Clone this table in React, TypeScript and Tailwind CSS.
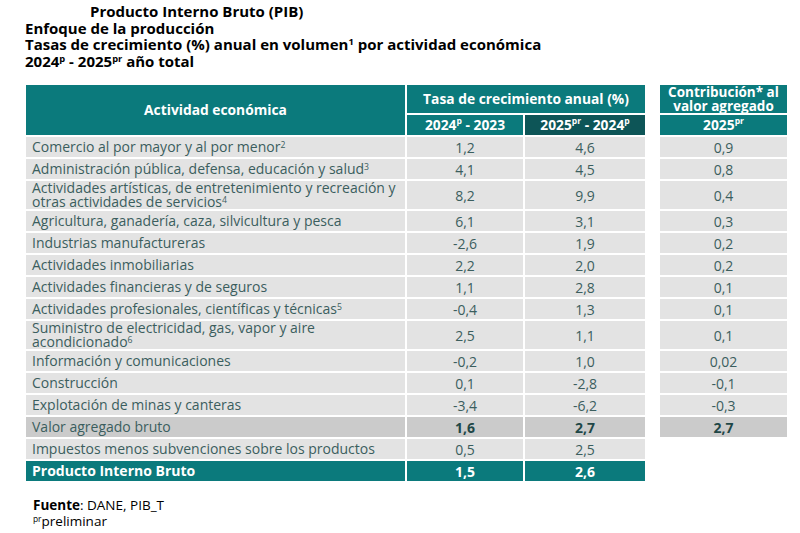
import React from "react"

type Row = {
  name: React.ReactNode
  a: string
  b: string
  c?: string
  tall?: boolean
  kind?: "normal" | "total" | "pib"
}

const Sup = ({ children }: { children: React.ReactNode }) => <sup className="text-[0.62em]">{children}</sup>

const rows: Row[] = [
  { name: <>Comercio al por mayor y al por menor<Sup>2</Sup></>, a: "1,2", b: "4,6", c: "0,9" },
  { name: <>Administración pública, defensa, educación y salud<Sup>3</Sup></>, a: "4,1", b: "4,5", c: "0,8" },
  {
    name: <>Actividades artísticas, de entretenimiento y recreación y<br />otras actividades de servicios<Sup>4</Sup></>,
    a: "8,2", b: "9,9", c: "0,4", tall: true,
  },
  { name: "Agricultura, ganadería, caza, silvicultura y pesca", a: "6,1", b: "3,1", c: "0,3" },
  { name: "Industrias manufactureras", a: "-2,6", b: "1,9", c: "0,2" },
  { name: "Actividades inmobiliarias", a: "2,2", b: "2,0", c: "0,2" },
  { name: "Actividades financieras y de seguros", a: "1,1", b: "2,8", c: "0,1" },
  { name: <>Actividades profesionales, científicas y técnicas<Sup>5</Sup></>, a: "-0,4", b: "1,3", c: "0,1" },
  {
    name: <>Suministro de electricidad, gas, vapor y aire<br />acondicionado<Sup>6</Sup></>,
    a: "2,5", b: "1,1", c: "0,1", tall: true,
  },
  { name: "Información y comunicaciones", a: "-0,2", b: "1,0", c: "0,02" },
  { name: "Construcción", a: "0,1", b: "-2,8", c: "-0,1" },
  { name: "Explotación de minas y canteras", a: "-3,4", b: "-6,2", c: "-0,3" },
  { name: "Valor agregado bruto", a: "1,6", b: "2,7", c: "2,7", kind: "total" },
  { name: "Impuestos menos subvenciones sobre los productos", a: "0,5", b: "2,5" },
  { name: "Producto Interno Bruto", a: "1,5", b: "2,6", kind: "pib" },
]

export default function App() {
  return (
    <div
      className="w-[800px] h-[533px] bg-white text-[14px] text-[#3b5e5e] overflow-hidden"
      style={{ fontFamily: "'Open Sans', 'Noto Sans', sans-serif" }}
    >
      <div className="pt-[3px] pl-[25px] font-bold text-[15px] leading-[16.5px] text-black">
        <div className="pl-[65px]">Producto Interno Bruto (PIB)</div>
        <div>Enfoque de la producción</div>
        <div>
          Tasas de crecimiento (%) anual en volumen<Sup>1</Sup> por actividad económica
        </div>
        <div>
          2024<Sup>p</Sup> - 2025<Sup>pr</Sup> año total
        </div>
      </div>

      <div className="mt-[16px] ml-[26px] grid grid-cols-[379px_116px_120px_11px_127px] gap-[2px]">
        {/* header */}
        <div className="row-span-2 bg-[#0b7a7c] text-white font-bold text-[13.8px] flex items-center justify-center">
          Actividad económica
        </div>
        <div className="col-span-2 h-[28px] bg-[#0b7a7c] text-white font-bold text-[13.8px] flex items-center justify-center">
          Tasa de crecimiento anual (%)
        </div>
        <div />
        <div className="h-[28px] bg-[#0b7a7c] text-white font-bold text-[13.5px] leading-[14px] flex items-center justify-center text-center">
          Contribución* al
          <br />
          valor agregado
        </div>
        <div className="h-[20px] bg-[#0b7a7c] text-white font-bold text-[13.8px] flex items-center justify-center">
          2024<Sup>p</Sup>&nbsp;- 2023
        </div>
        <div className="h-[20px] bg-[#0d5557] text-white font-bold text-[13.8px] flex items-center justify-center">
          2025<Sup>pr</Sup>&nbsp;- 2024<Sup>p</Sup>
        </div>
        <div />
        <div className="h-[20px] bg-[#0b7a7c] text-white font-bold text-[13.8px] flex items-center justify-center">
          2025<Sup>pr</Sup>
        </div>

        {rows.map((r, i) => {
          const kind = r.kind || "normal"
          const bg =
            kind === "pib" ? "bg-[#0b7a7c] text-white font-bold" : kind === "total" ? "bg-[#cbcbcb]" : "bg-[#e3e3e3]"
          const h = r.tall ? "h-[28px]" : "h-[20px]"
          const num = kind === "total" ? "font-bold text-[#1f4747]" : ""
          return (
            <React.Fragment key={i}>
              <div className={`${bg} ${h} pl-[6px] flex items-center leading-[14px]`}>
                <div>{r.name}</div>
              </div>
              <div className={`${bg} ${h} ${num} flex items-center justify-center`}>{r.a}</div>
              <div className={`${bg} ${h} ${num} flex items-center justify-center`}>{r.b}</div>
              <div />
              {r.c ? (
                <div className={`${bg} ${h} ${num} flex items-center justify-center`}>{r.c}</div>
              ) : (
                <div />
              )}
            </React.Fragment>
          )
        })}
      </div>

      <div className="mt-[16px] ml-[33px] text-black text-[13.5px] leading-[16px]">
        <div>
          <span className="font-bold">Fuente</span>: DANE, PIB_T
        </div>
        <div>
          <Sup>pr</Sup>preliminar
        </div>
      </div>
    </div>
  )
}
